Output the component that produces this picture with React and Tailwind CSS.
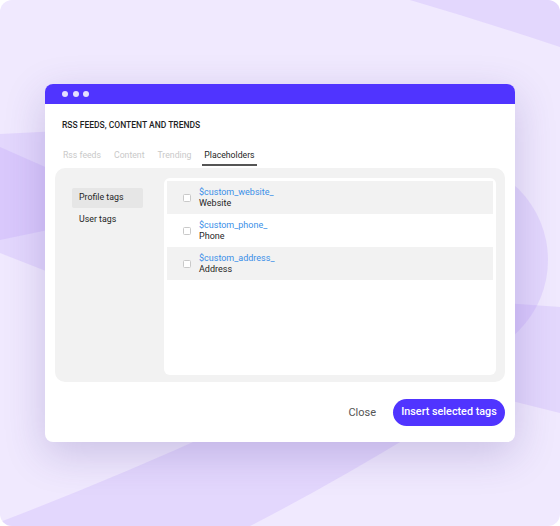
import React from "react";

const font = { fontFamily: 'Roboto, "Noto Sans", sans-serif' };

function Bg() {
  return (
    <svg className="absolute inset-0" width="560" height="526" viewBox="0 0 560 526">
      <rect width="560" height="526" fill="#f0e9fe" />
      <g fill="#b496fa" fillOpacity="0.22">
        <path d="M410,0 Q485,22 560,47 L560,0 Z" />
        <path d="M0,134 L120,128 L120,300 L0,253 Z" />
        <path d="M0,147 L120,200 L120,215 L0,240 Z" />
        <circle cx="448" cy="260" r="100" />
        <path d="M460,300 L560,307 L560,413 L460,388 Z" />
        <path d="M0,522 Q110,480 220,430 L420,430 Q330,485 250,526 L0,526 Z" />
      </g>
    </svg>
  );
}

function Row({ tag, label, shaded }) {
  return (
    <div className={`h-[33px] flex items-center pl-[16px] gap-[8px] ${shaded ? "bg-[#f2f2f2]" : "bg-white"}`}>
      <div className="w-[8px] h-[8px] rounded-[1.5px] border border-[#c9c9c9] bg-white shrink-0" />
      <div className="flex flex-col text-[9px] leading-[11px]">
        <span className="text-[#3a8fe8]">{tag}</span>
        <span className="text-[#1f1f1f]">{label}</span>
      </div>
    </div>
  );
}

export default function App() {
  return (
    <div className="relative w-[560px] h-[526px] overflow-hidden rounded-[12px]" style={font}>
      <Bg />
      <div className="relative pt-[84px] pl-[45px]">
        <div className="w-[470px] h-[358px] bg-white rounded-[8px] overflow-hidden shadow-[0_12px_40px_rgba(70,50,140,0.22)] flex flex-col">
          <div className="h-[20px] bg-[#5034ff] flex items-center pl-[17px] gap-[4.5px] shrink-0">
            <div className="w-[6px] h-[6px] rounded-full bg-[#e4e0ff]" />
            <div className="w-[6px] h-[6px] rounded-full bg-[#e4e0ff]" />
            <div className="w-[6px] h-[6px] rounded-full bg-[#e4e0ff]" />
          </div>
          <div className="pt-[15px] pl-[17px] text-[8.5px] leading-[12px] font-medium text-[#1f1f1f]">
            RSS FEEDS, CONTENT AND TRENDS
          </div>
          <div className="mt-[18px] ml-[16px] flex gap-[9px] text-[8.7px] leading-[12px]">
            <div className="px-[2px] pb-[5px] text-[#c9c9c9]">Rss feeds</div>
            <div className="px-[2px] pb-[5px] text-[#c9c9c9]">Content</div>
            <div className="px-[2px] pb-[5px] text-[#c9c9c9]">Trending</div>
            <div className="px-[2px] pb-[3px] text-[#1f1f1f] border-b-2 border-[#555]">Placeholders</div>
          </div>
          <div className="mt-[2px] mx-[10px] h-[214px] bg-[#f2f2f2] rounded-[10px] flex shrink-0">
            <div className="w-[109px] pl-[17px] pt-[20px] flex flex-col gap-[2px] text-[8.8px] shrink-0">
              <div className="w-[71px] h-[20px] px-[7px] flex items-center bg-[#e6e6e6] rounded-[2px] text-[#1f1f1f]">Profile tags</div>
              <div className="w-[71px] h-[20px] px-[7px] flex items-center text-[#1f1f1f]">User tags</div>
            </div>
            <div className="mt-[10px] mb-[7px] mr-[9px] flex-1 bg-white rounded-[6px] p-[3px]">
              <Row tag="$custom_website_" label="Website" shaded />
              <Row tag="$custom_phone_" label="Phone" />
              <Row tag="$custom_address_" label="Address" shaded />
            </div>
          </div>
          <div className="mt-[17px] mr-[10px] flex justify-end items-center gap-[17px]">
            <span className="text-[11px] text-[#555] pt-[2px]">Close</span>
            <div className="h-[27px] w-[112px] justify-center rounded-full bg-[#5034ff] text-white text-[10.8px] font-medium flex items-center">
              Insert selected tags
            </div>
          </div>
        </div>
      </div>
    </div>
  );
}
